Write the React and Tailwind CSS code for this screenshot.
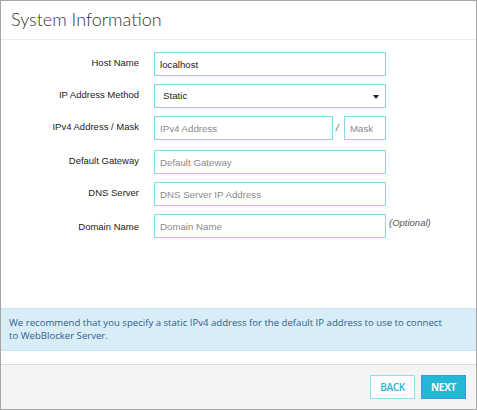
import React from "react";

const labelCls =
  "w-[139px] shrink-0 pr-[1px] text-right text-[9.5px] leading-none text-[#222] -mt-[2px]";
const inputCls =
  "h-[24px] border border-[#86d9e8] bg-white px-[5px] text-[9.7px] text-[#222] placeholder:text-[#8a8a8a] outline-none";

function Row({ label, children, extra = "" }) {
  return (
    <div className={`flex items-center ${extra}`}>
      <div className={labelCls}>{label}</div>
      <div className="ml-[14px] flex items-center">{children}</div>
    </div>
  );
}

export default function App() {
  return (
    <div
      className="flex h-[410px] w-[477px] flex-col border border-[#a6a6a6] bg-white"
      style={{ fontFamily: "'Liberation Sans', Arial, sans-serif" }}
    >
      <div className="flex h-[39px] shrink-0 items-center border-b border-[#ececec] pl-[10px]">
        <h1
          className="text-[18px] font-light text-[#333] -mt-[1px]"
          style={{ fontFamily: "Lato, 'Open Sans', sans-serif" }}
        >
          System Information
        </h1>
      </div>

      <div className="flex flex-1 flex-col pt-[12px]">
        <div className="flex flex-col gap-[8px]">
          <Row label="Host Name">
            <input className={`${inputCls} w-[232px]`} defaultValue="localhost" />
          </Row>
          <Row label="IP Address Method">
            <div className="relative flex h-[24px] w-[232px] items-center border border-[#86d9e8] pl-[8px] text-[9.7px] text-[#222]">
              Static
              <span className="absolute right-[6px] top-[10px] h-0 w-0 border-x-[3px] border-t-[4px] border-x-transparent border-t-[#222]" />
            </div>
          </Row>
          <Row label="IPv4 Address / Mask" extra="mb-[2px]">
            <input className={`${inputCls} w-[179px]`} placeholder="IPv4 Address" />
            <span className="ml-[3px] w-[8px] text-[9.5px] italic text-[#555]">/</span>
            <input className={`${inputCls} w-[42px]`} placeholder="Mask" />
          </Row>
          <Row label="Default Gateway">
            <input className={`${inputCls} w-[232px]`} placeholder="Default Gateway" />
          </Row>
          <Row label="DNS Server">
            <input className={`${inputCls} w-[232px]`} placeholder="DNS Server IP Address" />
          </Row>
          <div className="flex items-start">
            <div className={`${labelCls} mt-[8px]`}>Domain Name</div>
            <div className="ml-[14px] flex items-start">
              <input className={`${inputCls} w-[232px]`} placeholder="Domain Name" />
              <span className="ml-[3px] mt-[2px] text-[9.5px] italic text-[#555]">
                (Optional)
              </span>
            </div>
          </div>
        </div>

        <div
          className="mt-auto mb-[13px] border-y border-[#c7e6f3] bg-[#d9edf7] pl-[8px] pr-[28px] pt-[7px] pb-[8px] text-[9.6px] leading-[13px] text-[#2d5f8f]"
          style={{ fontFamily: "'Open Sans', sans-serif" }}
        >
          We recommend that you specify a static IPv4 address for the default IP address to use to
          connect to WebBlocker Server.
        </div>
      </div>

      <div
        className="flex h-[45px] shrink-0 items-center justify-end gap-[6px] border-t border-[#dcdcdc] bg-[#f4f4f4] pr-[10px]"
        style={{ fontFamily: "'Open Sans', sans-serif" }}
      >
        <button className="flex h-[24px] w-[45px] items-center justify-center border border-[#8fe0ee] bg-white text-[10px] font-semibold tracking-[-0.3px] text-[#2ab3d3]">
          BACK
        </button>
        <button className="flex h-[24px] w-[45px] items-center justify-center border border-[#4a8fe0] bg-[#23b8d6] text-[10px] font-bold tracking-[-0.3px] text-white">
          NEXT
        </button>
      </div>
    </div>
  );
}
